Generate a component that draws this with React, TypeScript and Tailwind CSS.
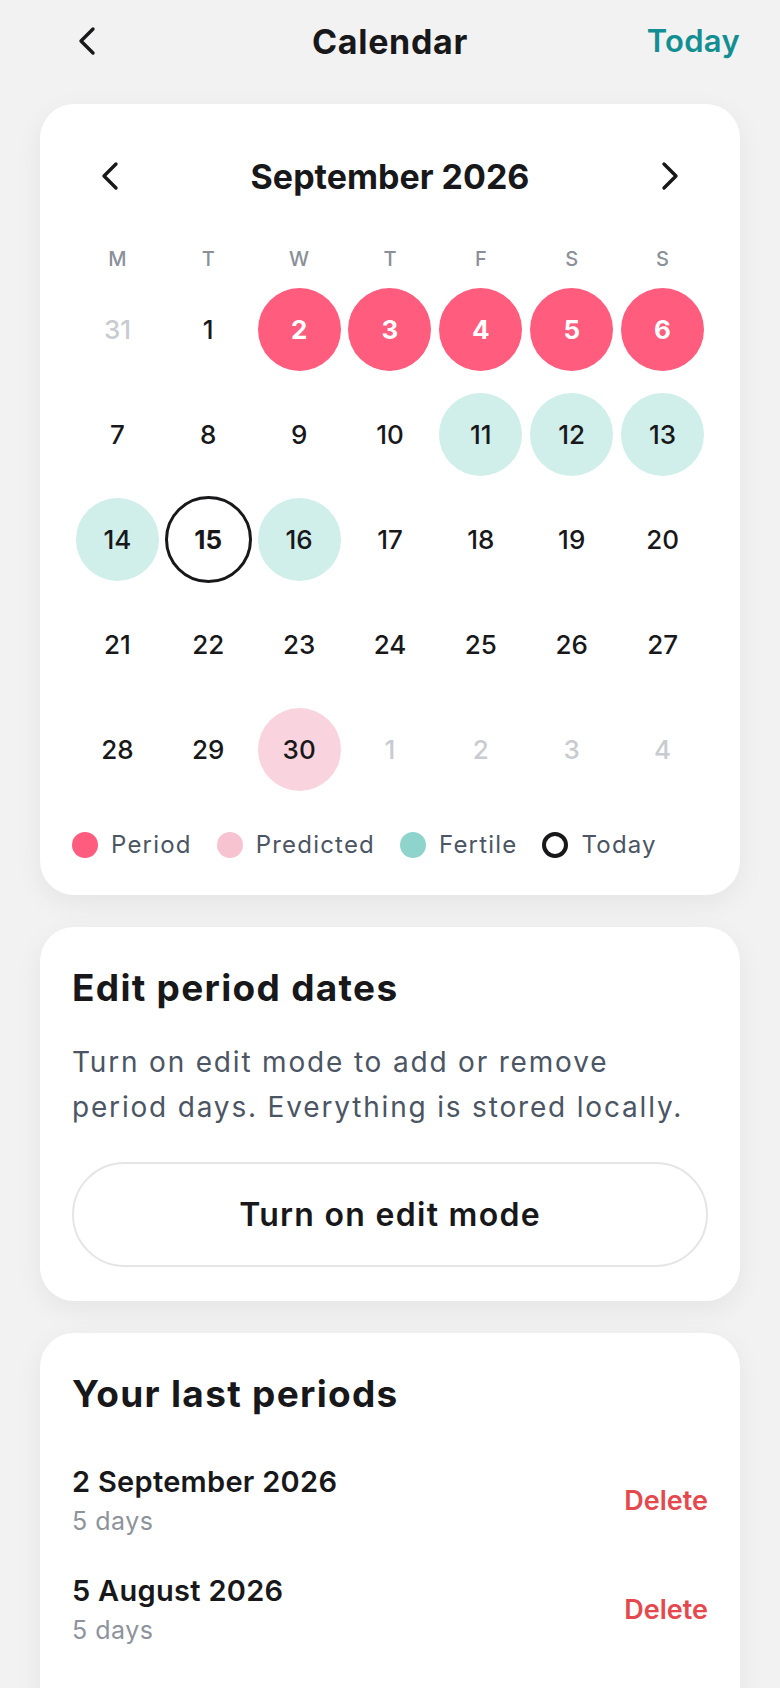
const days: { n: number; kind: "out" | "normal" | "period" | "fertile" | "predicted" | "today" }[] = [
  { n: 31, kind: "out" },
  { n: 1, kind: "normal" },
  { n: 2, kind: "period" },
  { n: 3, kind: "period" },
  { n: 4, kind: "period" },
  { n: 5, kind: "period" },
  { n: 6, kind: "period" },
  { n: 7, kind: "normal" },
  { n: 8, kind: "normal" },
  { n: 9, kind: "normal" },
  { n: 10, kind: "normal" },
  { n: 11, kind: "fertile" },
  { n: 12, kind: "fertile" },
  { n: 13, kind: "fertile" },
  { n: 14, kind: "fertile" },
  { n: 15, kind: "today" },
  { n: 16, kind: "fertile" },
  { n: 17, kind: "normal" },
  { n: 18, kind: "normal" },
  { n: 19, kind: "normal" },
  { n: 20, kind: "normal" },
  { n: 21, kind: "normal" },
  { n: 22, kind: "normal" },
  { n: 23, kind: "normal" },
  { n: 24, kind: "normal" },
  { n: 25, kind: "normal" },
  { n: 26, kind: "normal" },
  { n: 27, kind: "normal" },
  { n: 28, kind: "normal" },
  { n: 29, kind: "normal" },
  { n: 30, kind: "predicted" },
  { n: 1, kind: "out" },
  { n: 2, kind: "out" },
  { n: 3, kind: "out" },
  { n: 4, kind: "out" },
];

const weekdays = ["M", "T", "W", "T", "F", "S", "S"];

const periods = [
  { date: "2 September 2026", length: "5 days" },
  { date: "5 August 2026", length: "5 days" },
];

const dayStyles = {
  out: "h-[83px] w-[83px] text-[#c8cbd0] font-medium",
  normal: "h-[83px] w-[83px] text-[#18181b] font-medium",
  period: "h-[83px] w-[83px] bg-[#ff5c7e] text-white font-bold",
  fertile: "h-[83px] w-[83px] bg-[#d0eeea] text-[#18181b] font-medium",
  predicted: "h-[83px] w-[83px] bg-[#f9d4df] text-[#18181b] font-medium",
  today: "-my-[2px] h-[87px] w-[87px] border-[3px] border-[#18181b] text-[#18181b] font-bold",
};

const legend = [
  { label: "Period", dot: "bg-[#ff5c7e]" },
  { label: "Predicted", dot: "bg-[#f7c3d0]" },
  { label: "Fertile", dot: "bg-[#8ed4cd]" },
  { label: "Today", dot: "border-[4px] border-[#18181b]" },
];

const Chevron = ({ dir }: { dir: "left" | "right" }) => (
  <svg width="20" height="30" viewBox="0 0 20 30" fill="none">
    <path
      d={dir === "left" ? "M16 3 L4 15 L16 27" : "M4 3 L16 15 L4 27"}
      stroke="#18181b"
      strokeWidth="3.4"
      strokeLinecap="round"
      strokeLinejoin="round"
    />
  </svg>
);

const App = () => {
  return (
    <div
      className="min-h-[1688px] overflow-hidden bg-[#f2f2f2] text-[#18181b]"
      style={{ fontFamily: "Inter, 'Noto Sans', sans-serif" }}
    >
      {/* Header */}
      <div className="flex h-[82px] items-center justify-between px-10">
        <button className="flex w-[120px] items-center pl-[37px]">
          <Chevron dir="left" />
        </button>
        <h1 className="text-[34px] font-bold tracking-[0.02em]">Calendar</h1>
        <button className="w-[120px] text-right text-[31px] font-semibold tracking-[0.01em] text-[#138f93]">
          Today
        </button>
      </div>

      <div className="flex flex-col gap-8 px-10 pt-[22px]">
        {/* Calendar card */}
        <div className="rounded-[34px] bg-white px-8 pb-[38px] pt-[52px] shadow-[0_8px_28px_rgba(0,0,0,0.06)]">
          <div className="flex h-10 items-center justify-between px-[28px]">
            <Chevron dir="left" />
            <span className="text-[34px] font-bold">September 2026</span>
            <Chevron dir="right" />
          </div>

          <div className="mt-12 grid h-6 grid-cols-7 items-center text-center text-[20px] font-medium text-[#8a8f98]">
            {weekdays.map((d, i) => (
              <span key={i}>{d}</span>
            ))}
          </div>

          <div className="mt-5 grid grid-cols-7 gap-y-[22px]">
            {days.map((d, i) => (
              <div key={i} className="flex justify-center">
                <div
                  className={`flex items-center justify-center rounded-full text-[26px] ${dayStyles[d.kind]}`}
                >
                  {d.n}
                </div>
              </div>
            ))}
          </div>

          {/* Legend */}
          <div className="mt-[42px] flex h-6 items-center gap-[25px] text-[24px] tracking-[0.05em] text-[#4b5563]">
            {legend.map((l) => (
              <div key={l.label} className="flex items-center gap-[13px]">
                <span className={`h-[26px] w-[26px] rounded-full ${l.dot}`} />
                {l.label}
              </div>
            ))}
          </div>
        </div>

        {/* Edit card */}
        <div className="rounded-[34px] bg-white px-8 pb-[34px] pt-10 shadow-[0_8px_28px_rgba(0,0,0,0.06)]">
          <h2 className="text-[37px] font-bold leading-[42px] tracking-[0.035em]">Edit period dates</h2>
          <p className="mt-[31px] text-[28px] leading-[45px] tracking-[0.065em] text-[#4b5563]">
            Turn on edit mode to add or remove
            <br />
            period days. Everything is stored locally.
          </p>
          <button className="mt-8 flex h-[105px] w-full items-center justify-center rounded-full border-2 border-[#e5e5e5] text-[32px] font-semibold tracking-[0.04em]">
            Turn on edit mode
          </button>
        </div>

        {/* Last periods */}
        <div className="rounded-[34px] bg-white px-8 pb-24 pt-10 shadow-[0_8px_28px_rgba(0,0,0,0.06)]">
          <h2 className="text-[37px] font-bold leading-[42px] tracking-[0.035em]">Your last periods</h2>
          <div className="mt-[51px] flex flex-col gap-[39px]">
            {periods.map((p) => (
              <div key={p.date} className="flex items-center justify-between">
                <div className="flex flex-col gap-[8px]">
                  <span className="text-[29px] font-semibold leading-8 tracking-[0.01em]">{p.date}</span>
                  <span className="text-[25px] leading-[30px] tracking-[0.02em] text-[#8e939b]">{p.length}</span>
                </div>
                <button className="text-[27px] font-semibold text-[#e5484d]">Delete</button>
              </div>
            ))}
          </div>
        </div>
      </div>
    </div>
  );
};

export default App;
